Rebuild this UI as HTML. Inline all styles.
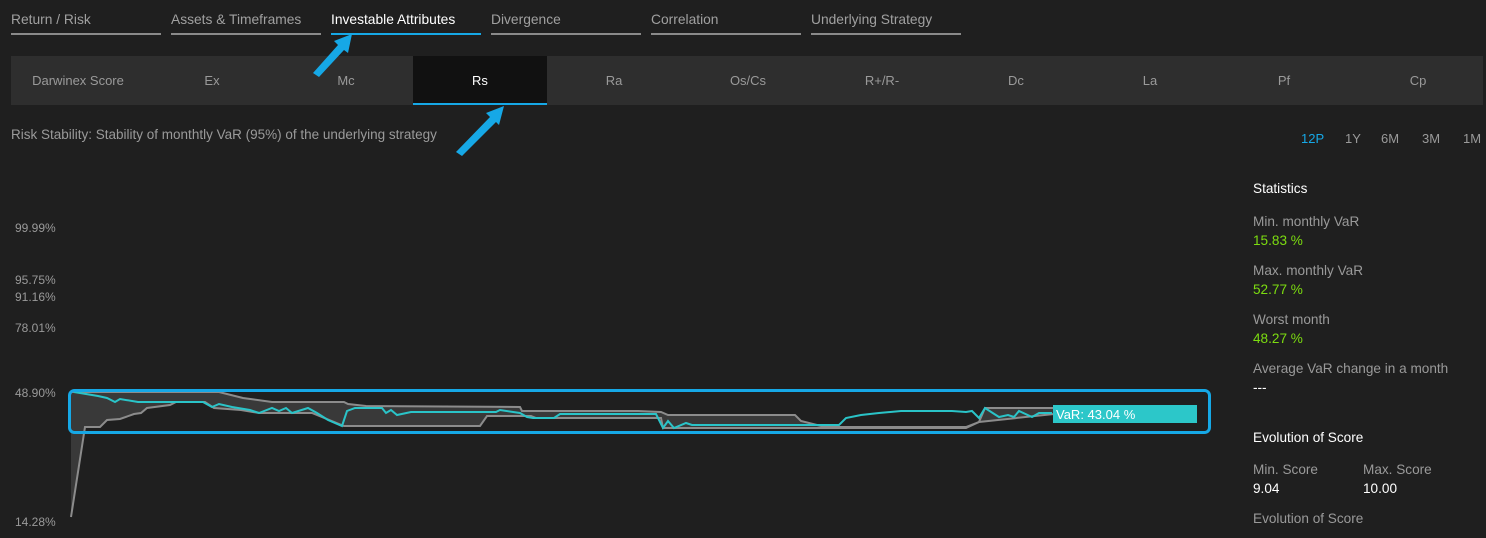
<!DOCTYPE html>
<html><head><style>
body{margin:0;width:1486px;height:538px;background:#1f1f1f;font-family:"Liberation Sans",sans-serif;overflow:hidden;position:relative;color:#9a9a9a}
.a{position:absolute;white-space:nowrap}
.tab{position:absolute;top:12px;width:150px;height:21px;border-bottom:2px solid #8a8a8a;font-size:13.8px;color:#a0a0a0}
.tab.on{color:#fff;border-color:#16a8e6}
.sub{position:absolute;top:56px;height:49px;width:134px;text-align:center;line-height:49px;font-size:13px;color:#9a9a9a}
.yl{position:absolute;left:15px;font-size:12px;color:#9a9a9a}
.st{position:absolute;left:1253px;font-size:13.6px;color:#9a9a9a}
.g{color:#7cdc10}
</style></head><body>
<div class="tab" style="left:11px">Return / Risk</div>
<div class="tab" style="left:171px">Assets &amp; Timeframes</div>
<div class="tab on" style="left:331px">Investable Attributes</div>
<div class="tab" style="left:491px">Divergence</div>
<div class="tab" style="left:651px">Correlation</div>
<div class="tab" style="left:811px">Underlying Strategy</div>
<div class="a" style="left:11px;top:56px;width:1472px;height:49px;background:#2e2e2e"></div>
<div class="sub" style="left:11px">Darwinex Score</div>
<div class="sub" style="left:145px">Ex</div>
<div class="sub" style="left:279px">Mc</div>
<div class="sub" style="left:413px;background:#111;color:#fff;height:47px;border-bottom:2px solid #16a8e6">Rs</div>
<div class="sub" style="left:547px">Ra</div>
<div class="sub" style="left:681px">Os/Cs</div>
<div class="sub" style="left:815px">R+/R-</div>
<div class="sub" style="left:949px">Dc</div>
<div class="sub" style="left:1083px">La</div>
<div class="sub" style="left:1217px">Pf</div>
<div class="sub" style="left:1351px">Cp</div>
<div class="a" style="left:11px;top:127px;font-size:13.5px;color:#9a9a9a">Risk Stability: Stability of monthtly VaR (95%) of the underlying strategy</div>
<div class="a" style="left:1301px;top:131px;font-size:13px;color:#16a8e6">12P</div>
<div class="a" style="left:1345px;top:131px;font-size:13px">1Y</div>
<div class="a" style="left:1381px;top:131px;font-size:13px">6M</div>
<div class="a" style="left:1422px;top:131px;font-size:13px">3M</div>
<div class="a" style="left:1463px;top:131px;font-size:13px">1M</div>
<div class="yl" style="top:221px">99.99%</div>
<div class="yl" style="top:273px">95.75%</div>
<div class="yl" style="top:290px">91.16%</div>
<div class="yl" style="top:321px">78.01%</div>
<div class="yl" style="top:386px">48.90%</div>
<div class="yl" style="top:515px">14.28%</div>
<svg class="a" style="left:0;top:0" width="1486" height="538">
<polygon points="71,392 219,392 243,398 272,402 344,402 348,404 366,406 520,407 522,411 638,411 661,412 668,415 795,415 801,421 825,427 966,427 979,422 985,408 1054,408 1054,414 979,422 966,428 663,428 661,418 536,418 531,416 487,416 480,426 344,426 312,413 259,413 241,410 214,408 205,402 176,402 170,405 147,408 141,413 134,414 120,419 107,420 100,427 85,427 71,517" fill="#393939"/>
<polyline points="71,392 219,392 243,398 272,402 344,402 348,404 366,406 520,407 522,411 638,411 661,412 668,415 795,415 801,421 825,427 966,427 979,422 985,408 1054,408" fill="none" stroke="#8c8c8c" stroke-width="2"/>
<polyline points="71,517 85,427 100,427 107,420 120,419 134,414 141,413 147,408 170,405 176,402 205,402 214,408 241,410 259,413 312,413 344,426 480,426 487,416 531,416 536,418 661,418 663,428 966,428 979,422 1054,414" fill="none" stroke="#8c8c8c" stroke-width="2"/>
<polyline points="74,392 98,396 107,398 115,402 120,399 138,402 203,402 212,407 219,404 232,407 250,410 259,413 272,408 279,411 286,408 292,413 308,408 317,413 328,420 342,426 347,411 355,408 382,408 386,413 391,410 397,415 411,412 496,412 500,410 520,413 527,417 533,418 554,418 560,414 656,414 663,428 668,421 674,428 686,423 692,425 839,425 846,418 861,415 879,413 901,411 952,411 966,412 972,411 979,418 985,408 999,417 1008,415 1014,417 1019,411 1032,417 1039,413 1052,413" fill="none" stroke="#2ac4c8" stroke-width="2"/>
<rect x="69.5" y="390.5" width="1140" height="42" rx="5" fill="none" stroke="#16a8e6" stroke-width="3"/>
<rect x="1053" y="405" width="144" height="18" fill="#2cc7c9"/>
<text x="1056" y="419" font-family="Liberation Sans" font-size="13" fill="#fff">VaR: 43.04 %</text>
<polygon points="352,34 334,41 338,45 313,73 319,77 344,50 348,53" fill="#16a8e6"/>
<polygon points="504,106 486,113 490,117 456,152 462,156 496,122 499,125" fill="#16a8e6"/>
</svg>
<div class="st" style="top:181px;color:#fff">Statistics</div>
<div class="st" style="top:214px">Min. monthly VaR</div>
<div class="st g" style="top:233px">15.83 %</div>
<div class="st" style="top:263px">Max. monthly VaR</div>
<div class="st g" style="top:282px">52.77 %</div>
<div class="st" style="top:312px">Worst month</div>
<div class="st g" style="top:331px">48.27 %</div>
<div class="st" style="top:361px">Average VaR change in a month</div>
<div class="st" style="top:380px;color:#fff">---</div>
<div class="st" style="top:430px;color:#fff">Evolution of Score</div>
<div class="st" style="top:462px">Min. Score</div>
<div class="st" style="top:481px;color:#fff">9.04</div>
<div class="st" style="top:462px;left:1363px">Max. Score</div>
<div class="st" style="top:481px;left:1363px;color:#fff">10.00</div>
<div class="st" style="top:511px">Evolution of Score</div>
</body></html>
